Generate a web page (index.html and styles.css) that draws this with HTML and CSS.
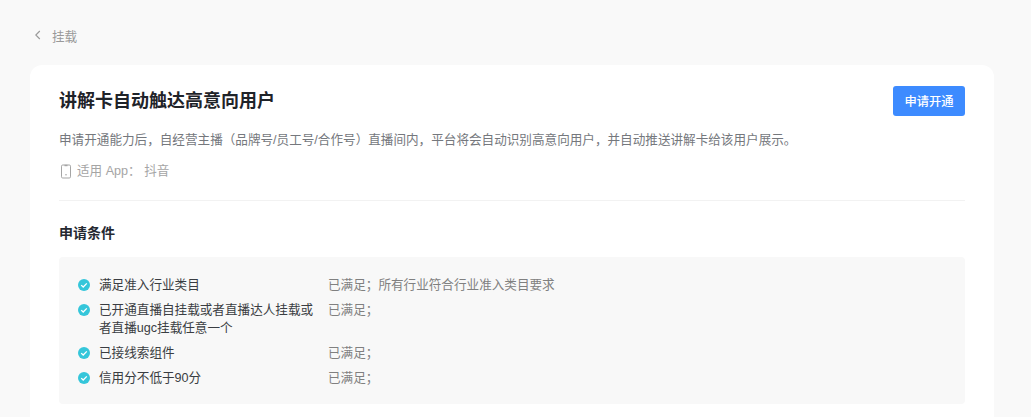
FILE: index.html
```html
<!DOCTYPE html>
<html lang="zh-CN">

<head>
    <meta charset="UTF-8">
    <meta name="viewport" content="width=device-width, initial-scale=1.0">
    <title>挂载</title>
    <link rel="stylesheet" href="styles.css">
</head>

<body>
    <div class="page">
        <div class="breadcrumb">
            <svg class="back-icon" width="8" height="10" viewBox="0 0 8 10"><path d="M5.8 1 1.8 5l4 4" fill="none" stroke="#999" stroke-width="1.1"/></svg>
            <span>挂载</span>
        </div>

        <div class="card">
            <div class="card-head">
                <h1 class="card-title">讲解卡自动触达高意向用户</h1>
                <button class="apply-btn">申请开通</button>
            </div>
            <p class="card-desc">申请开通能力后，自经营主播（品牌号/员工号/合作号）直播间内，平台将会自动识别高意向用户，并自动推送讲解卡给该用户展示。</p>
            <div class="app-line">
                <svg class="app-icon" width="12" height="15" viewBox="0 0 12 15"><rect x="1.5" y="1" width="9" height="13" rx="1.2" fill="none" stroke="#a5a5a5" stroke-width="1"/><path d="M4.5 1.5h3" stroke="#a5a5a5" stroke-width="1.4"/><circle cx="6" cy="10.8" r=".8" fill="#a5a5a5"/></svg>
                <span>适用 App： 抖音</span>
            </div>

            <div class="divider"></div>

            <h2 class="section-title">申请条件</h2>

            <div class="conditions">
                <div class="row">
                    <svg class="check" width="12" height="12" viewBox="0 0 12 12"><circle cx="6" cy="6" r="6" fill="#35c6da"/><path d="M3.2 6.1 5.2 8l3.6-3.6" fill="none" stroke="#fff" stroke-width="1.3"/></svg>
                    <div class="row-name">满足准入行业类目</div>
                    <div class="row-state">已满足；所有行业符合行业准入类目要求</div>
                </div>
                <div class="row">
                    <svg class="check" width="12" height="12" viewBox="0 0 12 12"><circle cx="6" cy="6" r="6" fill="#35c6da"/><path d="M3.2 6.1 5.2 8l3.6-3.6" fill="none" stroke="#fff" stroke-width="1.3"/></svg>
                    <div class="row-name">已开通直播自挂载或者直播达人挂载或者直播ugc挂载任意一个</div>
                    <div class="row-state">已满足；</div>
                </div>
                <div class="row">
                    <svg class="check" width="12" height="12" viewBox="0 0 12 12"><circle cx="6" cy="6" r="6" fill="#35c6da"/><path d="M3.2 6.1 5.2 8l3.6-3.6" fill="none" stroke="#fff" stroke-width="1.3"/></svg>
                    <div class="row-name">已接线索组件</div>
                    <div class="row-state">已满足；</div>
                </div>
                <div class="row">
                    <svg class="check" width="12" height="12" viewBox="0 0 12 12"><circle cx="6" cy="6" r="6" fill="#35c6da"/><path d="M3.2 6.1 5.2 8l3.6-3.6" fill="none" stroke="#fff" stroke-width="1.3"/></svg>
                    <div class="row-name">信用分不低于90分</div>
                    <div class="row-state">已满足；</div>
                </div>
            </div>
        </div>
    </div>
</body>

</html>
```

FILE: styles.css
```css
html, body {
    margin: 0;
    padding: 0;
    height: 100%;
    overflow: hidden;
}

body {
    background: #f9f9f9;
    font-family: "Liberation Sans", "Noto Sans CJK SC", sans-serif;
    color: #252931;
}

.page {
    display: flex;
    flex-direction: column;
    height: 100%;
    padding: 0 37px 0 30px;
    box-sizing: border-box;
}

.breadcrumb {
    display: flex;
    align-items: center;
    height: 20px;
    padding: 25px 0 20px 4px;
    font-size: 12.6px;
    color: #999;
}

.back-icon {
    margin-right: 10px;
}

.card {
    flex: 1;
    background: #fff;
    border-radius: 12px 12px 0 0;
    padding: 21px 29px 0 29px;
}

.card-head {
    display: flex;
    align-items: center;
    justify-content: space-between;
    height: 30px;
}

.card-title {
    margin: 0;
    font-size: 18px;
    font-weight: 600;
    line-height: 30px;
    color: #1f2329;
}

.apply-btn {
    width: 72px;
    height: 30px;
    border: 0;
    border-radius: 3px;
    background: #3d8bff;
    color: #fff;
    font-family: inherit;
    font-size: 12.3px;
    font-weight: 500;
    padding: 0;
}

.card-desc {
    margin: 14px 0 0;
    font-size: 12.6px;
    line-height: 20px;
    color: #75787d;
}

.app-line {
    display: flex;
    align-items: center;
    gap: 5px;
    margin-top: 11px;
    font-size: 12.6px;
    line-height: 20px;
    color: #a5a5a5;
}

.app-icon {
    margin-left: 1px;
}

.divider {
    height: 1px;
    background: #f2f2f2;
    margin-top: 19px;
}

.section-title {
    margin: 22px 0 0;
    font-size: 14px;
    font-weight: 600;
    line-height: 20px;
    color: #252931;
}

.conditions {
    margin-top: 14px;
    padding: 19px 19px 10px 19px;
    background: #f8f8f8;
    border-radius: 4px;
}

.row {
    display: flex;
    align-items: flex-start;
    font-size: 12.6px;
    line-height: 18px;
    margin-bottom: 7px;
}

.check {
    flex: none;
    margin-top: 3px;
    margin-right: 9px;
}

.row-name {
    width: 216px;
    margin-right: 13px;
    color: #3a3d42;
}

.row-state {
    color: #808080;
}
```
